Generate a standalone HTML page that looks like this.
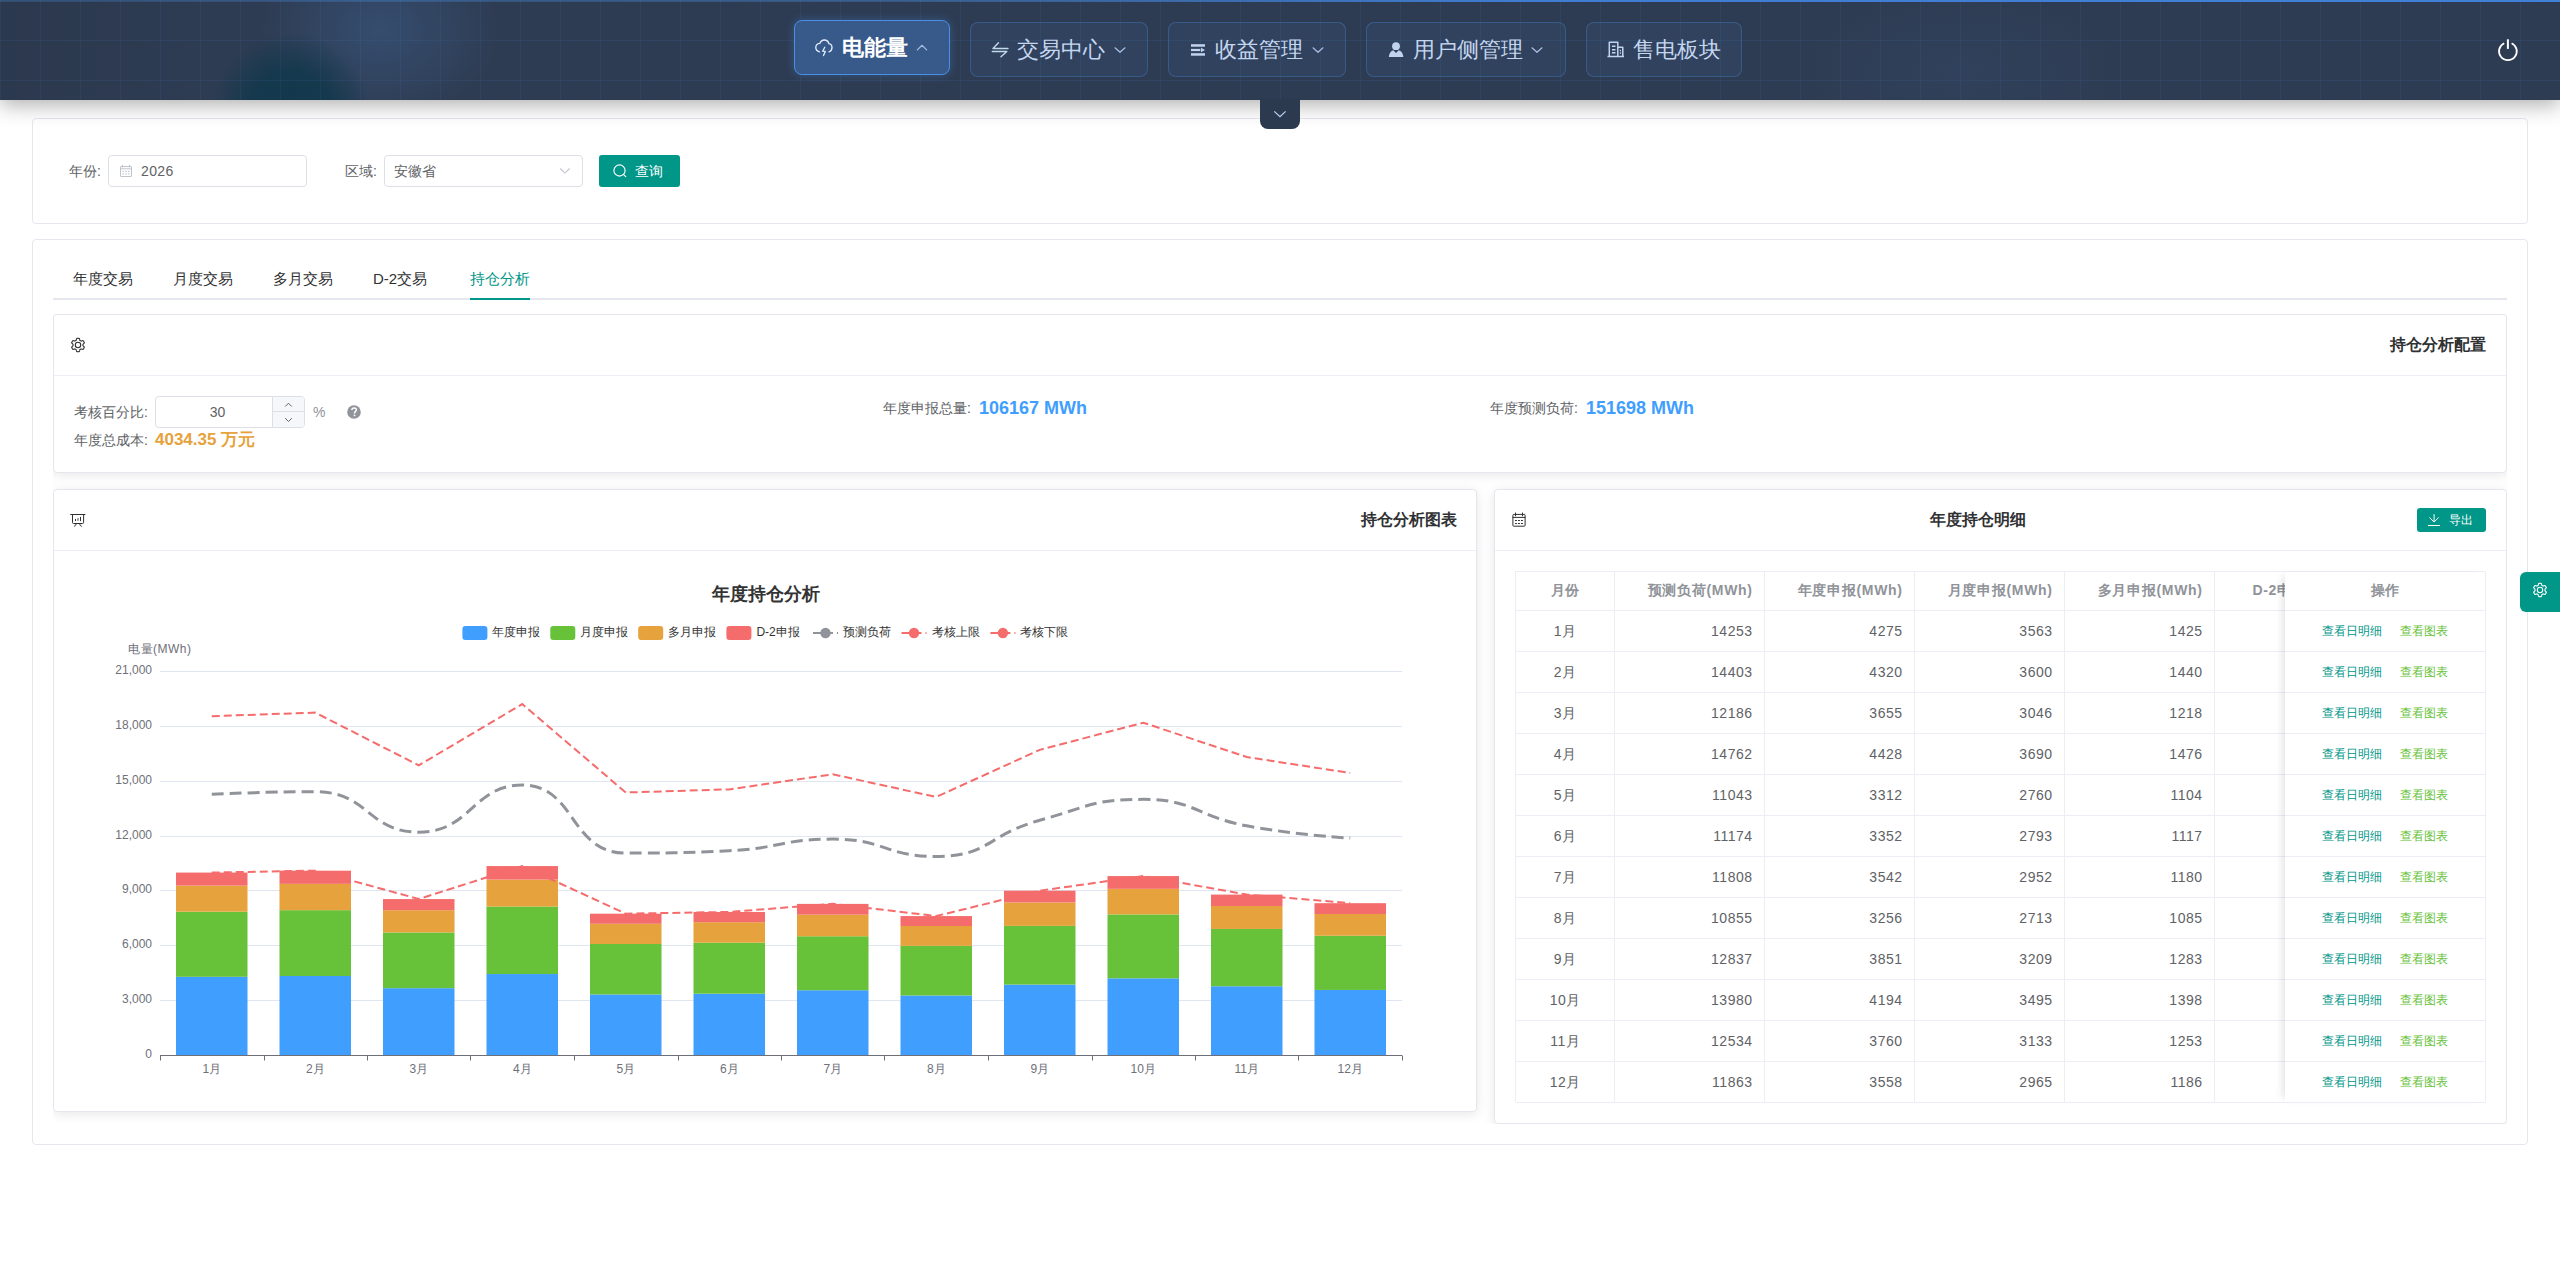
<!DOCTYPE html>
<html><head><meta charset="utf-8"><style>
*{box-sizing:border-box;margin:0;padding:0}
html,body{width:2560px;height:1271px;overflow:hidden;background:#fff;font-family:"Liberation Sans",sans-serif;color:#606266}
.abs{position:absolute}
#hdr{position:absolute;left:0;top:0;width:2560px;height:100px;background-color:#2e3c53;
 background-image:
  linear-gradient(rgba(70,130,210,0.10) 1px, transparent 1px),
  linear-gradient(90deg, rgba(70,130,210,0.10) 1px, transparent 1px),
  radial-gradient(circle 80px at 290px 112px, rgba(18,56,76,1) 0%, rgba(18,56,76,0.9) 50%, rgba(18,56,76,0) 100%),
  radial-gradient(ellipse 120px 90px at 380px 30px, rgba(62,98,145,0.45), rgba(62,98,145,0) 100%),
  radial-gradient(ellipse 160px 80px at 1960px 70px, rgba(60,92,135,0.16), rgba(60,92,135,0) 100%),
  linear-gradient(90deg, rgba(0,0,0,0.06), rgba(0,0,0,0) 230px);
 background-size:40px 40px,40px 40px,100% 100%,100% 100%,100% 100%,100% 100%;
 box-shadow:0 5px 20px rgba(0,0,0,0.32);z-index:5}
#hdr .topline{position:absolute;left:0;top:0;width:2560px;height:2px;background:linear-gradient(90deg,rgba(74,144,226,0.22),rgba(74,144,226,0.35) 35%,rgba(64,128,216,0.95) 60%,#4080d8)}
.nav{position:absolute;height:55px;border-radius:8px;border:1px solid rgba(74,144,226,0.32);background:rgba(70,125,200,0.10);color:#c5d6ef;font-size:22px;line-height:52px;white-space:nowrap}
.nav.act{background:#375a8b;border-color:#4a8ee6;color:#fff;font-weight:bold;box-shadow:0 0 10px rgba(74,144,226,0.35)}
.nav svg{position:absolute}
.nav .t{position:absolute;top:0}
#collapse{position:absolute;left:1260px;top:99px;width:40px;height:29.5px;background:#2c3a50;border-radius:0 0 8px 8px;z-index:6}
.card{position:absolute;background:#fff;border:1px solid #e4e7ed;border-radius:4px}
.sh{box-shadow:0 2px 12px 0 rgba(0,0,0,0.1)}
.lbl{position:absolute;font-size:14px;color:#606266;line-height:20px;white-space:nowrap}
.inp{position:absolute;border:1px solid #dcdfe6;border-radius:4px;background:#fff}
.btn{position:absolute;background:#009688;border-radius:3px;color:#fff;font-size:14px}
.tab{position:absolute;top:269px;font-size:15px;line-height:20px;color:#303133;white-space:nowrap}
.tab.act{color:#009688}
.ttl{position:absolute;font-size:16px;font-weight:bold;color:#303133;line-height:22px;white-space:nowrap}
.tbl{position:absolute;left:1515px;top:571px;width:970px;height:531px;border:1px solid #ebeef5;border-width:1px 0 0 1px}
.th,.td{position:absolute;border-right:1px solid #ebeef5;border-bottom:1px solid #ebeef5;padding:0 12px;white-space:nowrap;overflow:hidden}
.th{top:0;height:39px;line-height:36px;font-size:14px;font-weight:bold;color:#909399;letter-spacing:0.7px;padding-right:11.3px}
.td{height:41px;line-height:40px;font-size:14px;color:#606266;letter-spacing:0.5px;padding-right:11.5px}
.fix{position:absolute;left:2285px;top:572px;width:201px;height:530px;background:#fff;box-shadow:-6px 0 8px -4px rgba(0,0,0,0.12)}
.fth{position:absolute;left:0;top:0;width:201px;height:39px;line-height:36px;text-align:center;font-size:14px;font-weight:bold;color:#909399;border:1px solid #ebeef5;border-width:0 1px 1px 0}
.ftd{position:absolute;left:0;width:201px;height:41px;line-height:40px;text-align:center;font-size:12px;border-right:1px solid #ebeef5;border-bottom:1px solid #ebeef5}
.ftd .l1{color:#009688}
.ftd .l2{color:#67c23a;margin-left:18px}

</style></head><body>
<div id="hdr"><div class="topline"></div>
 <div class="nav act" style="left:794px;top:20px;width:156px;height:55px"><span class="t" style="left:47px;top:1px">电能量</span></div>
 <div class="nav" style="left:970px;top:22px;width:178px"><span class="t" style="left:46px;top:1px">交易中心</span></div>
 <div class="nav" style="left:1168px;top:22px;width:178px"><span class="t" style="left:46px;top:1px">收益管理</span></div>
 <div class="nav" style="left:1366px;top:22px;width:200px"><span class="t" style="left:46px;top:1px">用户侧管理</span></div>
 <div class="nav" style="left:1586px;top:22px;width:156px"><span class="t" style="left:46px;top:1px">售电板块</span></div>
 <svg style="position:absolute;left:0;top:0" width="2560" height="100" viewBox="0 0 2560 100">
  <g fill="none" stroke-linecap="round" stroke-linejoin="round">
   <path d="M819.5,51.8 C817,51.3 815.8,49.6 815.8,47.6 C815.8,45.3 817.6,43.6 819.8,43.4 C820.6,41.3 822.3,40 824.3,40 C826.6,40 828.3,41.6 828.8,43.6 C830.7,43.9 832,45.5 832,47.6 C832,49.6 830.8,51.3 829,51.8" stroke="#e6eefc" stroke-width="1.3"/>
   <path d="M824.8,47.2 L822.6,51.2 L825.3,51.4 L823.5,55.6" stroke="#e6eefc" stroke-width="1.3"/>
   <path d="M917.3,49.9 L922.1,45.3 L926.7,49.9" stroke="#a9bfe2" stroke-width="1.2"/>
   <path d="M998.5,42.8 L993,48.5 H1008 M992.3,51.5 H1006.8 L1001,56.7" stroke="#c3daea" stroke-width="1.4"/>
   <path d="M1115,47.8 L1120,52.3 L1125,47.8" stroke="#a9bfe2" stroke-width="1.2"/>
   <path d="M1313,47.8 L1318,52.3 L1323,47.8" stroke="#a9bfe2" stroke-width="1.2"/>
   <path d="M1532,47.8 L1537,52.3 L1542,47.8" stroke="#a9bfe2" stroke-width="1.2"/>
   <path d="M1609.3,56.2 V42.3 H1617.8 V56.2 M1617.8,47.2 H1622.8 V56.2 M1607.5,56.4 H1624 M1612,46.2 H1615.5 M1612,49.7 H1615.5 M1612,52.8 H1615.5 M1619.8,50.5 H1621 M1619.8,53 H1621" stroke="#c2d3ef" stroke-width="1.5" stroke-linecap="butt"/>
   <path d="M2504.2,43.2 A8.9,8.9 0 1 0 2511.6,43.2" stroke="#fff" stroke-width="1.8" stroke-linecap="butt"/>
   <path d="M2507.9,39.3 V48.9" stroke="#fff" stroke-width="2" stroke-linecap="butt"/>
  </g>
  <g fill="#c2d3ef">
   <rect x="1191" y="44.2" width="14" height="2.5"/>
   <rect x="1191" y="48.9" width="9.3" height="2.2"/>
   <path d="M1201,47.8 L1205,50 L1201,52.2Z"/>
   <rect x="1191" y="53.2" width="14" height="2.5"/>
   <circle cx="1396" cy="46.2" r="3.9"/>
   <path d="M1388.8,57 C1389.2,53 1391.3,50.8 1393.2,50.3 L1396,53 L1398.8,50.3 C1401,50.8 1403,53 1403.4,57Z"/>
  </g>
 </svg>
</div>
<div id="collapse"><svg style="position:absolute;left:0;top:0" width="40" height="29" viewBox="1260 99 40 29"><path d="M1274.3,111.4 L1280,116.7 L1285.6,111.4" fill="none" stroke="#bcd4f0" stroke-width="1.2"/></svg></div>

<!-- filter card -->
<div class="card" style="left:32px;top:118px;width:2496px;height:106px"></div>
<div class="lbl" style="left:69px;top:161px">年份:</div>
<div class="inp" style="left:108px;top:155px;width:199px;height:32px"></div>
<svg class="abs" style="left:114px;top:160px" width="24" height="24" viewBox="114 160 24 24"><g fill="none" stroke="#c0c4cc" stroke-width="1"><rect x="120.5" y="166.5" width="11" height="10" rx="0.5"/><path d="M120.5,168.8 H131.5 M122.5,165 V167.5 M129.5,165 V167.5"/></g><g fill="#c0c4cc"><rect x="122.4" y="170.8" width="1.6" height="1.1"/><rect x="125.2" y="170.8" width="1.6" height="1.1"/><rect x="127.9" y="170.8" width="1.6" height="1.1"/><rect x="122.4" y="173.4" width="1.6" height="1.1"/><rect x="125.2" y="173.4" width="1.6" height="1.1"/><rect x="127.9" y="173.4" width="1.6" height="1.1"/></g></svg>
<div class="lbl" style="left:141px;top:161px;color:#606266;letter-spacing:0.4px">2026</div>
<div class="lbl" style="left:345px;top:161px">区域:</div>
<div class="inp" style="left:384px;top:155px;width:199px;height:32px"></div>
<div class="lbl" style="left:394px;top:161px">安徽省</div>
<svg class="abs" style="left:552px;top:160px" width="24" height="22" viewBox="552 160 24 22"><path d="M560.3,168.5 L564.9,173.1 L569.6,168.5" fill="none" stroke="#c0c4cc" stroke-width="1.1"/></svg>
<div class="btn" style="left:599px;top:155px;width:81px;height:32px"></div>
<svg class="abs" style="left:606px;top:158px" width="24" height="24" viewBox="606 158 24 24"><circle cx="619.5" cy="170.5" r="5.6" fill="none" stroke="#fff" stroke-width="1.15"/><path d="M623.6,174.6 L625.8,176.6" stroke="#fff" stroke-width="1.15" stroke-linecap="round"/></svg>
<div class="lbl" style="left:635px;top:161px;color:#fff">查询</div>

<!-- main card -->
<div class="card" style="left:32px;top:239px;width:2496px;height:906px"></div>
<div class="abs" style="left:53px;top:298px;width:2454px;height:2px;background:#e4e7ed"></div>
<div class="tab" style="left:73px">年度交易</div>
<div class="tab" style="left:173px">月度交易</div>
<div class="tab" style="left:273px">多月交易</div>
<div class="tab" style="left:373px">D-2交易</div>
<div class="tab act" style="left:470px">持仓分析</div>
<div class="abs" style="left:470px;top:298px;width:60px;height:2px;background:#009688"></div>

<div class="abs" style="left:53px;top:314px;width:2454px;height:810px;overflow:hidden"><div class="abs" style="left:-53px;top:-314px;width:2560px;height:1271px"><div class="card sh" style="left:53px;top:314px;width:2454px;height:159px"></div><div class="card sh" style="left:53px;top:489px;width:1424px;height:623px"></div><div class="card sh" style="left:1494px;top:489px;width:1013px;height:635px"></div></div></div>
<!-- config card -->

<div class="abs" style="left:54px;top:375px;width:2452px;height:1px;background:#ebeef5"></div>
<svg class="abs" style="left:68px;top:334.9px" width="20" height="20" viewBox="68 334.9 20 20"><path d="M83.00,344.90 L83.00,344.81 L83.00,344.73 L82.99,344.64 L82.99,344.55 L82.98,344.46 L82.97,344.38 L82.96,344.29 L82.95,344.20 L82.94,344.12 L83.09,344.00 L83.24,343.88 L83.39,343.75 L83.53,343.62 L83.68,343.48 L83.81,343.34 L83.95,343.19 L84.08,343.04 L84.21,342.88 L84.33,342.72 L84.30,342.61 L84.25,342.50 L84.21,342.39 L84.17,342.28 L84.12,342.17 L84.07,342.07 L84.02,341.96 L83.97,341.86 L83.92,341.75 L83.86,341.65 L83.80,341.55 L83.74,341.45 L83.68,341.35 L83.62,341.25 L83.55,341.15 L83.49,341.06 L83.42,340.96 L83.35,340.87 L83.28,340.78 L83.21,340.68 L83.13,340.59 L83.06,340.50 L82.85,340.53 L82.65,340.56 L82.45,340.60 L82.26,340.64 L82.06,340.69 L81.87,340.75 L81.69,340.81 L81.50,340.87 L81.32,340.94 L81.15,341.01 L81.08,340.96 L81.01,340.91 L80.94,340.85 L80.87,340.80 L80.80,340.75 L80.72,340.71 L80.65,340.66 L80.58,340.61 L80.50,340.57 L80.42,340.53 L80.35,340.49 L80.27,340.44 L80.19,340.41 L80.11,340.37 L80.03,340.33 L79.95,340.30 L79.87,340.26 L79.79,340.23 L79.77,340.04 L79.74,339.85 L79.70,339.66 L79.66,339.47 L79.61,339.28 L79.56,339.09 L79.50,338.89 L79.43,338.70 L79.36,338.51 L79.28,338.32 L79.16,338.30 L79.05,338.28 L78.93,338.27 L78.82,338.25 L78.70,338.24 L78.58,338.23 L78.47,338.22 L78.35,338.21 L78.23,338.20 L78.12,338.20 L78.00,338.20 L77.88,338.20 L77.77,338.20 L77.65,338.21 L77.53,338.22 L77.42,338.23 L77.30,338.24 L77.18,338.25 L77.07,338.27 L76.95,338.28 L76.84,338.30 L76.72,338.32 L76.64,338.51 L76.57,338.70 L76.50,338.89 L76.44,339.09 L76.39,339.28 L76.34,339.47 L76.30,339.66 L76.26,339.85 L76.23,340.04 L76.21,340.23 L76.13,340.26 L76.05,340.30 L75.97,340.33 L75.89,340.37 L75.81,340.41 L75.73,340.44 L75.65,340.49 L75.58,340.53 L75.50,340.57 L75.42,340.61 L75.35,340.66 L75.28,340.71 L75.20,340.75 L75.13,340.80 L75.06,340.85 L74.99,340.91 L74.92,340.96 L74.85,341.01 L74.68,340.94 L74.50,340.87 L74.31,340.81 L74.13,340.75 L73.94,340.69 L73.74,340.64 L73.55,340.60 L73.35,340.56 L73.15,340.53 L72.94,340.50 L72.87,340.59 L72.79,340.68 L72.72,340.78 L72.65,340.87 L72.58,340.96 L72.51,341.06 L72.45,341.15 L72.38,341.25 L72.32,341.35 L72.26,341.45 L72.20,341.55 L72.14,341.65 L72.08,341.75 L72.03,341.86 L71.98,341.96 L71.93,342.07 L71.88,342.17 L71.83,342.28 L71.79,342.39 L71.75,342.50 L71.70,342.61 L71.67,342.72 L71.79,342.88 L71.92,343.04 L72.05,343.19 L72.19,343.34 L72.32,343.48 L72.47,343.62 L72.61,343.75 L72.76,343.88 L72.91,344.00 L73.06,344.12 L73.05,344.20 L73.04,344.29 L73.03,344.38 L73.02,344.46 L73.01,344.55 L73.01,344.64 L73.00,344.73 L73.00,344.81 L73.00,344.90 L73.00,344.99 L73.00,345.07 L73.01,345.16 L73.01,345.25 L73.02,345.34 L73.03,345.42 L73.04,345.51 L73.05,345.60 L73.06,345.68 L72.91,345.80 L72.76,345.92 L72.61,346.05 L72.47,346.18 L72.32,346.32 L72.19,346.46 L72.05,346.61 L71.92,346.76 L71.79,346.92 L71.67,347.08 L71.70,347.19 L71.75,347.30 L71.79,347.41 L71.83,347.52 L71.88,347.63 L71.93,347.73 L71.98,347.84 L72.03,347.94 L72.08,348.05 L72.14,348.15 L72.20,348.25 L72.26,348.35 L72.32,348.45 L72.38,348.55 L72.45,348.65 L72.51,348.74 L72.58,348.84 L72.65,348.93 L72.72,349.02 L72.79,349.12 L72.87,349.21 L72.94,349.30 L73.15,349.27 L73.35,349.24 L73.55,349.20 L73.74,349.16 L73.94,349.11 L74.13,349.05 L74.31,348.99 L74.50,348.93 L74.68,348.86 L74.85,348.79 L74.92,348.84 L74.99,348.89 L75.06,348.95 L75.13,349.00 L75.20,349.05 L75.28,349.09 L75.35,349.14 L75.42,349.19 L75.50,349.23 L75.58,349.27 L75.65,349.31 L75.73,349.36 L75.81,349.39 L75.89,349.43 L75.97,349.47 L76.05,349.50 L76.13,349.54 L76.21,349.57 L76.23,349.76 L76.26,349.95 L76.30,350.14 L76.34,350.33 L76.39,350.52 L76.44,350.71 L76.50,350.91 L76.57,351.10 L76.64,351.29 L76.72,351.48 L76.84,351.50 L76.95,351.52 L77.07,351.53 L77.18,351.55 L77.30,351.56 L77.42,351.57 L77.53,351.58 L77.65,351.59 L77.77,351.60 L77.88,351.60 L78.00,351.60 L78.12,351.60 L78.23,351.60 L78.35,351.59 L78.47,351.58 L78.58,351.57 L78.70,351.56 L78.82,351.55 L78.93,351.53 L79.05,351.52 L79.16,351.50 L79.28,351.48 L79.36,351.29 L79.43,351.10 L79.50,350.91 L79.56,350.71 L79.61,350.52 L79.66,350.33 L79.70,350.14 L79.74,349.95 L79.77,349.76 L79.79,349.57 L79.87,349.54 L79.95,349.50 L80.03,349.47 L80.11,349.43 L80.19,349.39 L80.27,349.36 L80.35,349.31 L80.42,349.27 L80.50,349.23 L80.58,349.19 L80.65,349.14 L80.72,349.09 L80.80,349.05 L80.87,349.00 L80.94,348.95 L81.01,348.89 L81.08,348.84 L81.15,348.79 L81.32,348.86 L81.50,348.93 L81.69,348.99 L81.87,349.05 L82.06,349.11 L82.26,349.16 L82.45,349.20 L82.65,349.24 L82.85,349.27 L83.06,349.30 L83.13,349.21 L83.21,349.12 L83.28,349.02 L83.35,348.93 L83.42,348.84 L83.49,348.74 L83.55,348.65 L83.62,348.55 L83.68,348.45 L83.74,348.35 L83.80,348.25 L83.86,348.15 L83.92,348.05 L83.97,347.94 L84.02,347.84 L84.07,347.73 L84.12,347.63 L84.17,347.52 L84.21,347.41 L84.25,347.30 L84.30,347.19 L84.33,347.08 L84.21,346.92 L84.08,346.76 L83.95,346.61 L83.81,346.46 L83.68,346.32 L83.53,346.18 L83.39,346.05 L83.24,345.92 L83.09,345.80 L82.94,345.68 L82.95,345.60 L82.96,345.51 L82.97,345.42 L82.98,345.34 L82.99,345.25 L82.99,345.16 L83.00,345.07 L83.00,344.99Z" fill="none" stroke="#303133" stroke-width="1.1" stroke-linejoin="round"/><circle cx="78" cy="344.9" r="2.7" fill="none" stroke="#303133" stroke-width="1.1"/></svg>
<div class="ttl" style="left:2390px;top:334px">持仓分析配置</div>
<div class="lbl" style="left:74px;top:402px">考核百分比:</div>
<div class="inp" style="left:155px;top:396px;width:150px;height:32px"></div>
<div class="abs" style="left:272px;top:397px;width:32px;height:30px;background:#f5f7fa;border-left:1px solid #dcdfe6;border-radius:0 3px 3px 0"></div>
<div class="abs" style="left:273px;top:411px;width:31px;height:1px;background:#dcdfe6"></div>
<svg class="abs" style="left:270px;top:394px" width="40" height="36" viewBox="270 394 40 36"><path d="M285.2,406.5 L288.5,403.2 L291.8,406.5 M285.2,418.2 L288.5,421.5 L291.8,418.2" fill="none" stroke="#606266" stroke-width="1"/></svg>

<div class="lbl" style="left:159px;top:402px;width:117px;text-align:center">30</div>
<div class="lbl" style="left:313px;top:402px;color:#909399">%</div>
<svg class="abs" style="left:340px;top:400px" width="26" height="24" viewBox="340 400 26 24"><circle cx="354" cy="412" r="6.8" fill="#909399"/><path d="M351.9,409.9 C351.9,408.6 352.9,407.9 354.2,407.9 C355.5,407.9 356.4,408.7 356.4,409.8 C356.4,411.2 354.7,411.5 354.5,413 V413.6" fill="none" stroke="#fff" stroke-width="1.5"/><rect x="353.7" y="414.6" width="1.6" height="1.6" fill="#fff"/></svg>
<div class="lbl" style="left:74px;top:430px">年度总成本:</div>
<div class="lbl" style="left:155px;top:429px;font-size:17px;font-weight:bold;color:#e6a23c;line-height:22px">4034.35 万元</div>
<div class="lbl" style="left:883px;top:398px">年度申报总量:</div>
<div class="lbl" style="left:979px;top:397px;font-size:18px;font-weight:bold;color:#409eff;line-height:22px">106167 MWh</div>
<div class="lbl" style="left:1490px;top:398px">年度预测负荷:</div>
<div class="lbl" style="left:1586px;top:397px;font-size:18px;font-weight:bold;color:#409eff;line-height:22px">151698 MWh</div>

<!-- chart card -->

<div class="abs" style="left:54px;top:550px;width:1422px;height:1px;background:#ebeef5"></div>
<svg class="abs" style="left:68px;top:510px" width="20" height="20" viewBox="68 510 20 20"><g fill="none" stroke="#303133" stroke-width="1" stroke-linecap="round"><path d="M70.6,514.5 H85"/><path d="M72.5,514.5 V522.5 Q72.5,523.5 73.5,523.5 H82.6 Q83.6,523.5 83.6,522.5 V514.5"/><path d="M76.3,523.7 Q76,525.8 74.4,526.3 M79.5,523.7 Q79.8,525.8 81.4,526.3"/><path d="M75.5,519.4 V520.7 M80.5,517.3 V520.7"/></g><rect x="77.2" y="518.2" width="1.5" height="2.6" fill="#7d8087"/></svg>
<div class="ttl" style="left:1361px;top:509px">持仓分析图表</div>
<svg width="1424" height="560" viewBox="53 550 1424 560" style="position:absolute;left:53px;top:550px">
<text x="152" y="1057.5" text-anchor="end" font-size="12" fill="#6E7079" font-family='"Liberation Sans", sans-serif'>0</text>
<line x1="160.0" y1="1000.5" x2="1402.0" y2="1000.5" stroke="#E0E6F1" stroke-width="1"/>
<text x="152" y="1002.5" text-anchor="end" font-size="12" fill="#6E7079" font-family='"Liberation Sans", sans-serif'>3,000</text>
<line x1="160.0" y1="945.5" x2="1402.0" y2="945.5" stroke="#E0E6F1" stroke-width="1"/>
<text x="152" y="947.5" text-anchor="end" font-size="12" fill="#6E7079" font-family='"Liberation Sans", sans-serif'>6,000</text>
<line x1="160.0" y1="890.5" x2="1402.0" y2="890.5" stroke="#E0E6F1" stroke-width="1"/>
<text x="152" y="892.5" text-anchor="end" font-size="12" fill="#6E7079" font-family='"Liberation Sans", sans-serif'>9,000</text>
<line x1="160.0" y1="836.5" x2="1402.0" y2="836.5" stroke="#E0E6F1" stroke-width="1"/>
<text x="152" y="838.5" text-anchor="end" font-size="12" fill="#6E7079" font-family='"Liberation Sans", sans-serif'>12,000</text>
<line x1="160.0" y1="781.5" x2="1402.0" y2="781.5" stroke="#E0E6F1" stroke-width="1"/>
<text x="152" y="783.5" text-anchor="end" font-size="12" fill="#6E7079" font-family='"Liberation Sans", sans-serif'>15,000</text>
<line x1="160.0" y1="726.5" x2="1402.0" y2="726.5" stroke="#E0E6F1" stroke-width="1"/>
<text x="152" y="728.5" text-anchor="end" font-size="12" fill="#6E7079" font-family='"Liberation Sans", sans-serif'>18,000</text>
<line x1="160.0" y1="671.5" x2="1402.0" y2="671.5" stroke="#E0E6F1" stroke-width="1"/>
<text x="152" y="673.5" text-anchor="end" font-size="12" fill="#6E7079" font-family='"Liberation Sans", sans-serif'>21,000</text>
<text x="128" y="653" font-size="12" letter-spacing="0.5" fill="#6E7079" font-family='"Liberation Sans", sans-serif'>电量(MWh)</text>
<rect x="176.00" y="976.83" width="71.5" height="78.17" fill="#409EFF"/>
<rect x="176.00" y="911.68" width="71.5" height="65.15" fill="#67C23A"/>
<rect x="176.00" y="885.62" width="71.5" height="26.06" fill="#E6A23C"/>
<rect x="176.00" y="872.58" width="71.5" height="13.04" fill="#F56C6C"/>
<rect x="279.50" y="976.01" width="71.5" height="78.99" fill="#409EFF"/>
<rect x="279.50" y="910.18" width="71.5" height="65.83" fill="#67C23A"/>
<rect x="279.50" y="883.85" width="71.5" height="26.33" fill="#E6A23C"/>
<rect x="279.50" y="870.68" width="71.5" height="13.17" fill="#F56C6C"/>
<rect x="383.00" y="988.17" width="71.5" height="66.83" fill="#409EFF"/>
<rect x="383.00" y="932.47" width="71.5" height="55.70" fill="#67C23A"/>
<rect x="383.00" y="910.20" width="71.5" height="22.27" fill="#E6A23C"/>
<rect x="383.00" y="899.06" width="71.5" height="11.14" fill="#F56C6C"/>
<rect x="486.50" y="974.03" width="71.5" height="80.97" fill="#409EFF"/>
<rect x="486.50" y="906.56" width="71.5" height="67.47" fill="#67C23A"/>
<rect x="486.50" y="879.57" width="71.5" height="26.99" fill="#E6A23C"/>
<rect x="486.50" y="866.07" width="71.5" height="13.49" fill="#F56C6C"/>
<rect x="590.00" y="994.44" width="71.5" height="60.56" fill="#409EFF"/>
<rect x="590.00" y="943.97" width="71.5" height="50.47" fill="#67C23A"/>
<rect x="590.00" y="923.78" width="71.5" height="20.19" fill="#E6A23C"/>
<rect x="590.00" y="913.69" width="71.5" height="10.09" fill="#F56C6C"/>
<rect x="693.50" y="993.71" width="71.5" height="61.29" fill="#409EFF"/>
<rect x="693.50" y="942.63" width="71.5" height="51.07" fill="#67C23A"/>
<rect x="693.50" y="922.21" width="71.5" height="20.43" fill="#E6A23C"/>
<rect x="693.50" y="911.99" width="71.5" height="10.22" fill="#F56C6C"/>
<rect x="797.00" y="990.23" width="71.5" height="64.77" fill="#409EFF"/>
<rect x="797.00" y="936.25" width="71.5" height="53.98" fill="#67C23A"/>
<rect x="797.00" y="914.68" width="71.5" height="21.58" fill="#E6A23C"/>
<rect x="797.00" y="903.89" width="71.5" height="10.79" fill="#F56C6C"/>
<rect x="900.50" y="995.46" width="71.5" height="59.54" fill="#409EFF"/>
<rect x="900.50" y="945.85" width="71.5" height="49.61" fill="#67C23A"/>
<rect x="900.50" y="926.01" width="71.5" height="19.84" fill="#E6A23C"/>
<rect x="900.50" y="916.08" width="71.5" height="9.93" fill="#F56C6C"/>
<rect x="1004.00" y="984.58" width="71.5" height="70.42" fill="#409EFF"/>
<rect x="1004.00" y="925.90" width="71.5" height="58.68" fill="#67C23A"/>
<rect x="1004.00" y="902.44" width="71.5" height="23.46" fill="#E6A23C"/>
<rect x="1004.00" y="890.70" width="71.5" height="11.74" fill="#F56C6C"/>
<rect x="1107.50" y="978.31" width="71.5" height="76.69" fill="#409EFF"/>
<rect x="1107.50" y="914.40" width="71.5" height="63.91" fill="#67C23A"/>
<rect x="1107.50" y="888.84" width="71.5" height="25.56" fill="#E6A23C"/>
<rect x="1107.50" y="876.06" width="71.5" height="12.78" fill="#F56C6C"/>
<rect x="1211.00" y="986.25" width="71.5" height="68.75" fill="#409EFF"/>
<rect x="1211.00" y="928.96" width="71.5" height="57.29" fill="#67C23A"/>
<rect x="1211.00" y="906.04" width="71.5" height="22.91" fill="#E6A23C"/>
<rect x="1211.00" y="894.58" width="71.5" height="11.47" fill="#F56C6C"/>
<rect x="1314.50" y="989.94" width="71.5" height="65.06" fill="#409EFF"/>
<rect x="1314.50" y="935.72" width="71.5" height="54.22" fill="#67C23A"/>
<rect x="1314.50" y="914.04" width="71.5" height="21.69" fill="#E6A23C"/>
<rect x="1314.50" y="903.19" width="71.5" height="10.84" fill="#F56C6C"/>
<line x1="160.0" y1="1055.5" x2="1402.0" y2="1055.5" stroke="#6E7079" stroke-width="1"/>
<line x1="160.5" y1="1055.5" x2="160.5" y2="1060.5" stroke="#6E7079" stroke-width="1"/>
<line x1="264.5" y1="1055.5" x2="264.5" y2="1060.5" stroke="#6E7079" stroke-width="1"/>
<line x1="367.5" y1="1055.5" x2="367.5" y2="1060.5" stroke="#6E7079" stroke-width="1"/>
<line x1="470.5" y1="1055.5" x2="470.5" y2="1060.5" stroke="#6E7079" stroke-width="1"/>
<line x1="574.5" y1="1055.5" x2="574.5" y2="1060.5" stroke="#6E7079" stroke-width="1"/>
<line x1="678.5" y1="1055.5" x2="678.5" y2="1060.5" stroke="#6E7079" stroke-width="1"/>
<line x1="781.5" y1="1055.5" x2="781.5" y2="1060.5" stroke="#6E7079" stroke-width="1"/>
<line x1="884.5" y1="1055.5" x2="884.5" y2="1060.5" stroke="#6E7079" stroke-width="1"/>
<line x1="988.5" y1="1055.5" x2="988.5" y2="1060.5" stroke="#6E7079" stroke-width="1"/>
<line x1="1092.5" y1="1055.5" x2="1092.5" y2="1060.5" stroke="#6E7079" stroke-width="1"/>
<line x1="1195.5" y1="1055.5" x2="1195.5" y2="1060.5" stroke="#6E7079" stroke-width="1"/>
<line x1="1298.5" y1="1055.5" x2="1298.5" y2="1060.5" stroke="#6E7079" stroke-width="1"/>
<line x1="1402.5" y1="1055.5" x2="1402.5" y2="1060.5" stroke="#6E7079" stroke-width="1"/>
<text x="211.75" y="1072.5" text-anchor="middle" font-size="12" fill="#6E7079" font-family='"Liberation Sans", sans-serif'>1月</text>
<text x="315.25" y="1072.5" text-anchor="middle" font-size="12" fill="#6E7079" font-family='"Liberation Sans", sans-serif'>2月</text>
<text x="418.75" y="1072.5" text-anchor="middle" font-size="12" fill="#6E7079" font-family='"Liberation Sans", sans-serif'>3月</text>
<text x="522.25" y="1072.5" text-anchor="middle" font-size="12" fill="#6E7079" font-family='"Liberation Sans", sans-serif'>4月</text>
<text x="625.75" y="1072.5" text-anchor="middle" font-size="12" fill="#6E7079" font-family='"Liberation Sans", sans-serif'>5月</text>
<text x="729.25" y="1072.5" text-anchor="middle" font-size="12" fill="#6E7079" font-family='"Liberation Sans", sans-serif'>6月</text>
<text x="832.75" y="1072.5" text-anchor="middle" font-size="12" fill="#6E7079" font-family='"Liberation Sans", sans-serif'>7月</text>
<text x="936.25" y="1072.5" text-anchor="middle" font-size="12" fill="#6E7079" font-family='"Liberation Sans", sans-serif'>8月</text>
<text x="1039.75" y="1072.5" text-anchor="middle" font-size="12" fill="#6E7079" font-family='"Liberation Sans", sans-serif'>9月</text>
<text x="1143.25" y="1072.5" text-anchor="middle" font-size="12" fill="#6E7079" font-family='"Liberation Sans", sans-serif'>10月</text>
<text x="1246.75" y="1072.5" text-anchor="middle" font-size="12" fill="#6E7079" font-family='"Liberation Sans", sans-serif'>11月</text>
<text x="1350.25" y="1072.5" text-anchor="middle" font-size="12" fill="#6E7079" font-family='"Liberation Sans", sans-serif'>12月</text>
<path d="M211.75,794.37 C211.75,794.37 265.34,791.63 315.25,791.63 C368.84,791.63 367.59,832.17 418.75,832.17 C471.09,832.17 472.71,785.07 522.25,785.07 C576.21,785.07 569.38,853.07 625.75,853.07 C672.88,853.07 677.65,853.07 729.25,850.68 C781.15,848.27 781.20,839.08 832.75,839.08 C884.70,839.08 885.63,856.51 936.25,856.51 C989.13,856.51 987.02,834.82 1039.75,820.27 C1090.52,806.25 1091.80,799.37 1143.25,799.37 C1195.30,799.37 1194.36,816.01 1246.75,825.81 C1297.86,835.37 1350.25,838.08 1350.25,838.08" fill="none" stroke="#909399" stroke-width="3" stroke-dasharray="12 6"/>
<path d="M211.75,716.19 L315.25,712.62 L418.75,765.32 L522.25,704.09 L625.75,792.49 L729.25,789.38 L832.75,774.31 L936.25,796.96 L1039.75,749.85 L1143.25,722.68 L1246.75,757.05 L1350.25,773.00" fill="none" stroke="#F56C6C" stroke-width="2" stroke-dasharray="8 4"/>
<path d="M211.75,872.56 L315.25,870.64 L418.75,899.02 L522.25,866.05 L625.75,913.65 L729.25,911.97 L832.75,903.86 L936.25,916.06 L1039.75,890.69 L1143.25,876.06 L1246.75,894.56 L1350.25,903.15" fill="none" stroke="#F56C6C" stroke-width="2" stroke-dasharray="8 4"/>
<text x="765.5" y="599.5" text-anchor="middle" font-size="18" font-weight="bold" fill="#333" font-family='"Liberation Sans", sans-serif'>年度持仓分析</text>
<rect x="462.4" y="626" width="25" height="14" rx="3" fill="#409EFF"/>
<text x="492.4" y="636" font-size="12" fill="#333" font-family='"Liberation Sans", sans-serif'>年度申报</text>
<rect x="550.3" y="626" width="25" height="14" rx="3" fill="#67C23A"/>
<text x="580.3" y="636" font-size="12" fill="#333" font-family='"Liberation Sans", sans-serif'>月度申报</text>
<rect x="638.2" y="626" width="25" height="14" rx="3" fill="#E6A23C"/>
<text x="668.2" y="636" font-size="12" fill="#333" font-family='"Liberation Sans", sans-serif'>多月申报</text>
<rect x="726.4" y="626" width="25" height="14" rx="3" fill="#F56C6C"/>
<text x="756.4" y="636" font-size="12" fill="#333" font-family='"Liberation Sans", sans-serif'>D-2申报</text>
<line x1="813" y1="633" x2="838" y2="633" stroke="#909399" stroke-width="2" stroke-dasharray="8 4"/>
<circle cx="825.5" cy="633" r="5.2" fill="#909399"/>
<text x="843" y="636" font-size="12" fill="#333" font-family='"Liberation Sans", sans-serif'>预测负荷</text>
<line x1="901.5" y1="633" x2="926.5" y2="633" stroke="#F56C6C" stroke-width="2" stroke-dasharray="8 4"/>
<circle cx="914.0" cy="633" r="5.2" fill="#F56C6C"/>
<text x="931.5" y="636" font-size="12" fill="#333" font-family='"Liberation Sans", sans-serif'>考核上限</text>
<line x1="990.4" y1="633" x2="1015.4" y2="633" stroke="#F56C6C" stroke-width="2" stroke-dasharray="8 4"/>
<circle cx="1002.9" cy="633" r="5.2" fill="#F56C6C"/>
<text x="1020.4" y="636" font-size="12" fill="#333" font-family='"Liberation Sans", sans-serif'>考核下限</text>
</svg>

<!-- table card -->

<div class="abs" style="left:1495px;top:550px;width:1011px;height:1px;background:#ebeef5"></div>
<svg class="abs" style="left:1509px;top:510px" width="20" height="20" viewBox="1509 510 20 20"><g fill="none" stroke="#303133" stroke-width="1"><rect x="1512.9" y="514.4" width="12.2" height="11.8" rx="0.8"/><path d="M1512.9,517.4 H1525.1 M1515.5,513 V515.8 M1522.5,513 V515.8" stroke-linecap="round"/></g><g fill="#303133"><rect x="1515" y="520" width="1.9" height="1"/><rect x="1518" y="520" width="1.9" height="1"/><rect x="1521" y="520" width="1.9" height="1"/><rect x="1515" y="523" width="1.9" height="1"/><rect x="1518" y="523" width="1.9" height="1"/><rect x="1521" y="523" width="1.9" height="1"/></g></svg>
<div class="ttl" style="left:1930px;top:509px">年度持仓明细</div>
<div class="btn" style="left:2417px;top:508px;width:69px;height:24px"></div>
<svg class="abs" style="left:2420px;top:508px" width="24" height="24" viewBox="2420 508 24 24"><path d="M2434.1,514.2 V522 M2429.4,517.4 L2434.1,522 L2438.7,517.4 M2428,525.5 H2440" fill="none" stroke="#fff" stroke-width="1"/></svg>
<div class="lbl" style="left:2449px;top:510px;color:#fff;font-size:12px">导出</div>
<div class="tbl">
<div class="th" style="left:0px;width:99px;text-align:center">月份</div>
<div class="th" style="left:99px;width:150px;text-align:right">预测负荷(MWh)</div>
<div class="th" style="left:249px;width:150px;text-align:right">年度申报(MWh)</div>
<div class="th" style="left:399px;width:150px;text-align:right">月度申报(MWh)</div>
<div class="th" style="left:549px;width:150px;text-align:right">多月申报(MWh)</div>
<div class="th" style="left:699px;width:150px;text-align:right">D-2申报(MWh)</div>
<div class="td" style="left:0px;top:39px;width:99px;text-align:center">1月</div>
<div class="td" style="left:99px;top:39px;width:150px;text-align:right">14253</div>
<div class="td" style="left:249px;top:39px;width:150px;text-align:right">4275</div>
<div class="td" style="left:399px;top:39px;width:150px;text-align:right">3563</div>
<div class="td" style="left:549px;top:39px;width:150px;text-align:right">1425</div>
<div class="td" style="left:699px;top:39px;width:150px"></div>
<div class="td" style="left:0px;top:80px;width:99px;text-align:center">2月</div>
<div class="td" style="left:99px;top:80px;width:150px;text-align:right">14403</div>
<div class="td" style="left:249px;top:80px;width:150px;text-align:right">4320</div>
<div class="td" style="left:399px;top:80px;width:150px;text-align:right">3600</div>
<div class="td" style="left:549px;top:80px;width:150px;text-align:right">1440</div>
<div class="td" style="left:699px;top:80px;width:150px"></div>
<div class="td" style="left:0px;top:121px;width:99px;text-align:center">3月</div>
<div class="td" style="left:99px;top:121px;width:150px;text-align:right">12186</div>
<div class="td" style="left:249px;top:121px;width:150px;text-align:right">3655</div>
<div class="td" style="left:399px;top:121px;width:150px;text-align:right">3046</div>
<div class="td" style="left:549px;top:121px;width:150px;text-align:right">1218</div>
<div class="td" style="left:699px;top:121px;width:150px"></div>
<div class="td" style="left:0px;top:162px;width:99px;text-align:center">4月</div>
<div class="td" style="left:99px;top:162px;width:150px;text-align:right">14762</div>
<div class="td" style="left:249px;top:162px;width:150px;text-align:right">4428</div>
<div class="td" style="left:399px;top:162px;width:150px;text-align:right">3690</div>
<div class="td" style="left:549px;top:162px;width:150px;text-align:right">1476</div>
<div class="td" style="left:699px;top:162px;width:150px"></div>
<div class="td" style="left:0px;top:203px;width:99px;text-align:center">5月</div>
<div class="td" style="left:99px;top:203px;width:150px;text-align:right">11043</div>
<div class="td" style="left:249px;top:203px;width:150px;text-align:right">3312</div>
<div class="td" style="left:399px;top:203px;width:150px;text-align:right">2760</div>
<div class="td" style="left:549px;top:203px;width:150px;text-align:right">1104</div>
<div class="td" style="left:699px;top:203px;width:150px"></div>
<div class="td" style="left:0px;top:244px;width:99px;text-align:center">6月</div>
<div class="td" style="left:99px;top:244px;width:150px;text-align:right">11174</div>
<div class="td" style="left:249px;top:244px;width:150px;text-align:right">3352</div>
<div class="td" style="left:399px;top:244px;width:150px;text-align:right">2793</div>
<div class="td" style="left:549px;top:244px;width:150px;text-align:right">1117</div>
<div class="td" style="left:699px;top:244px;width:150px"></div>
<div class="td" style="left:0px;top:285px;width:99px;text-align:center">7月</div>
<div class="td" style="left:99px;top:285px;width:150px;text-align:right">11808</div>
<div class="td" style="left:249px;top:285px;width:150px;text-align:right">3542</div>
<div class="td" style="left:399px;top:285px;width:150px;text-align:right">2952</div>
<div class="td" style="left:549px;top:285px;width:150px;text-align:right">1180</div>
<div class="td" style="left:699px;top:285px;width:150px"></div>
<div class="td" style="left:0px;top:326px;width:99px;text-align:center">8月</div>
<div class="td" style="left:99px;top:326px;width:150px;text-align:right">10855</div>
<div class="td" style="left:249px;top:326px;width:150px;text-align:right">3256</div>
<div class="td" style="left:399px;top:326px;width:150px;text-align:right">2713</div>
<div class="td" style="left:549px;top:326px;width:150px;text-align:right">1085</div>
<div class="td" style="left:699px;top:326px;width:150px"></div>
<div class="td" style="left:0px;top:367px;width:99px;text-align:center">9月</div>
<div class="td" style="left:99px;top:367px;width:150px;text-align:right">12837</div>
<div class="td" style="left:249px;top:367px;width:150px;text-align:right">3851</div>
<div class="td" style="left:399px;top:367px;width:150px;text-align:right">3209</div>
<div class="td" style="left:549px;top:367px;width:150px;text-align:right">1283</div>
<div class="td" style="left:699px;top:367px;width:150px"></div>
<div class="td" style="left:0px;top:408px;width:99px;text-align:center">10月</div>
<div class="td" style="left:99px;top:408px;width:150px;text-align:right">13980</div>
<div class="td" style="left:249px;top:408px;width:150px;text-align:right">4194</div>
<div class="td" style="left:399px;top:408px;width:150px;text-align:right">3495</div>
<div class="td" style="left:549px;top:408px;width:150px;text-align:right">1398</div>
<div class="td" style="left:699px;top:408px;width:150px"></div>
<div class="td" style="left:0px;top:449px;width:99px;text-align:center">11月</div>
<div class="td" style="left:99px;top:449px;width:150px;text-align:right">12534</div>
<div class="td" style="left:249px;top:449px;width:150px;text-align:right">3760</div>
<div class="td" style="left:399px;top:449px;width:150px;text-align:right">3133</div>
<div class="td" style="left:549px;top:449px;width:150px;text-align:right">1253</div>
<div class="td" style="left:699px;top:449px;width:150px"></div>
<div class="td" style="left:0px;top:490px;width:99px;text-align:center">12月</div>
<div class="td" style="left:99px;top:490px;width:150px;text-align:right">11863</div>
<div class="td" style="left:249px;top:490px;width:150px;text-align:right">3558</div>
<div class="td" style="left:399px;top:490px;width:150px;text-align:right">2965</div>
<div class="td" style="left:549px;top:490px;width:150px;text-align:right">1186</div>
<div class="td" style="left:699px;top:490px;width:150px"></div>
</div>
<div class="fix">
<div class="fth">操作</div>
<div class="ftd" style="top:39px"><span class="l1">查看日明细</span><span class="l2">查看图表</span></div>
<div class="ftd" style="top:80px"><span class="l1">查看日明细</span><span class="l2">查看图表</span></div>
<div class="ftd" style="top:121px"><span class="l1">查看日明细</span><span class="l2">查看图表</span></div>
<div class="ftd" style="top:162px"><span class="l1">查看日明细</span><span class="l2">查看图表</span></div>
<div class="ftd" style="top:203px"><span class="l1">查看日明细</span><span class="l2">查看图表</span></div>
<div class="ftd" style="top:244px"><span class="l1">查看日明细</span><span class="l2">查看图表</span></div>
<div class="ftd" style="top:285px"><span class="l1">查看日明细</span><span class="l2">查看图表</span></div>
<div class="ftd" style="top:326px"><span class="l1">查看日明细</span><span class="l2">查看图表</span></div>
<div class="ftd" style="top:367px"><span class="l1">查看日明细</span><span class="l2">查看图表</span></div>
<div class="ftd" style="top:408px"><span class="l1">查看日明细</span><span class="l2">查看图表</span></div>
<div class="ftd" style="top:449px"><span class="l1">查看日明细</span><span class="l2">查看图表</span></div>
<div class="ftd" style="top:490px"><span class="l1">查看日明细</span><span class="l2">查看图表</span></div>
</div>

<!-- floating settings -->
<div class="abs" style="left:2520px;top:572px;width:40px;height:40px;background:#009688;border-radius:6px 0 0 6px"></div>
<svg class="abs" style="left:2530px;top:580px" width="20" height="20" viewBox="2530 580 20 20"><path d="M2545.00,590.00 L2545.00,589.91 L2545.00,589.83 L2544.99,589.74 L2544.99,589.65 L2544.98,589.56 L2544.97,589.48 L2544.96,589.39 L2544.95,589.30 L2544.94,589.22 L2545.09,589.10 L2545.24,588.98 L2545.39,588.85 L2545.53,588.72 L2545.68,588.58 L2545.81,588.44 L2545.95,588.29 L2546.08,588.14 L2546.21,587.98 L2546.33,587.82 L2546.30,587.71 L2546.25,587.60 L2546.21,587.49 L2546.17,587.38 L2546.12,587.27 L2546.07,587.17 L2546.02,587.06 L2545.97,586.96 L2545.92,586.85 L2545.86,586.75 L2545.80,586.65 L2545.74,586.55 L2545.68,586.45 L2545.62,586.35 L2545.55,586.25 L2545.49,586.16 L2545.42,586.06 L2545.35,585.97 L2545.28,585.88 L2545.21,585.78 L2545.13,585.69 L2545.06,585.60 L2544.85,585.63 L2544.65,585.66 L2544.45,585.70 L2544.26,585.74 L2544.06,585.79 L2543.87,585.85 L2543.69,585.91 L2543.50,585.97 L2543.32,586.04 L2543.15,586.11 L2543.08,586.06 L2543.01,586.01 L2542.94,585.95 L2542.87,585.90 L2542.80,585.85 L2542.72,585.81 L2542.65,585.76 L2542.58,585.71 L2542.50,585.67 L2542.42,585.63 L2542.35,585.59 L2542.27,585.54 L2542.19,585.51 L2542.11,585.47 L2542.03,585.43 L2541.95,585.40 L2541.87,585.36 L2541.79,585.33 L2541.77,585.14 L2541.74,584.95 L2541.70,584.76 L2541.66,584.57 L2541.61,584.38 L2541.56,584.19 L2541.50,583.99 L2541.43,583.80 L2541.36,583.61 L2541.28,583.42 L2541.16,583.40 L2541.05,583.38 L2540.93,583.37 L2540.82,583.35 L2540.70,583.34 L2540.58,583.33 L2540.47,583.32 L2540.35,583.31 L2540.23,583.30 L2540.12,583.30 L2540.00,583.30 L2539.88,583.30 L2539.77,583.30 L2539.65,583.31 L2539.53,583.32 L2539.42,583.33 L2539.30,583.34 L2539.18,583.35 L2539.07,583.37 L2538.95,583.38 L2538.84,583.40 L2538.72,583.42 L2538.64,583.61 L2538.57,583.80 L2538.50,583.99 L2538.44,584.19 L2538.39,584.38 L2538.34,584.57 L2538.30,584.76 L2538.26,584.95 L2538.23,585.14 L2538.21,585.33 L2538.13,585.36 L2538.05,585.40 L2537.97,585.43 L2537.89,585.47 L2537.81,585.51 L2537.73,585.54 L2537.65,585.59 L2537.58,585.63 L2537.50,585.67 L2537.42,585.71 L2537.35,585.76 L2537.28,585.81 L2537.20,585.85 L2537.13,585.90 L2537.06,585.95 L2536.99,586.01 L2536.92,586.06 L2536.85,586.11 L2536.68,586.04 L2536.50,585.97 L2536.31,585.91 L2536.13,585.85 L2535.94,585.79 L2535.74,585.74 L2535.55,585.70 L2535.35,585.66 L2535.15,585.63 L2534.94,585.60 L2534.87,585.69 L2534.79,585.78 L2534.72,585.88 L2534.65,585.97 L2534.58,586.06 L2534.51,586.16 L2534.45,586.25 L2534.38,586.35 L2534.32,586.45 L2534.26,586.55 L2534.20,586.65 L2534.14,586.75 L2534.08,586.85 L2534.03,586.96 L2533.98,587.06 L2533.93,587.17 L2533.88,587.27 L2533.83,587.38 L2533.79,587.49 L2533.75,587.60 L2533.70,587.71 L2533.67,587.82 L2533.79,587.98 L2533.92,588.14 L2534.05,588.29 L2534.19,588.44 L2534.32,588.58 L2534.47,588.72 L2534.61,588.85 L2534.76,588.98 L2534.91,589.10 L2535.06,589.22 L2535.05,589.30 L2535.04,589.39 L2535.03,589.48 L2535.02,589.56 L2535.01,589.65 L2535.01,589.74 L2535.00,589.83 L2535.00,589.91 L2535.00,590.00 L2535.00,590.09 L2535.00,590.17 L2535.01,590.26 L2535.01,590.35 L2535.02,590.44 L2535.03,590.52 L2535.04,590.61 L2535.05,590.70 L2535.06,590.78 L2534.91,590.90 L2534.76,591.02 L2534.61,591.15 L2534.47,591.28 L2534.32,591.42 L2534.19,591.56 L2534.05,591.71 L2533.92,591.86 L2533.79,592.02 L2533.67,592.18 L2533.70,592.29 L2533.75,592.40 L2533.79,592.51 L2533.83,592.62 L2533.88,592.73 L2533.93,592.83 L2533.98,592.94 L2534.03,593.04 L2534.08,593.15 L2534.14,593.25 L2534.20,593.35 L2534.26,593.45 L2534.32,593.55 L2534.38,593.65 L2534.45,593.75 L2534.51,593.84 L2534.58,593.94 L2534.65,594.03 L2534.72,594.12 L2534.79,594.22 L2534.87,594.31 L2534.94,594.40 L2535.15,594.37 L2535.35,594.34 L2535.55,594.30 L2535.74,594.26 L2535.94,594.21 L2536.13,594.15 L2536.31,594.09 L2536.50,594.03 L2536.68,593.96 L2536.85,593.89 L2536.92,593.94 L2536.99,593.99 L2537.06,594.05 L2537.13,594.10 L2537.20,594.15 L2537.28,594.19 L2537.35,594.24 L2537.42,594.29 L2537.50,594.33 L2537.58,594.37 L2537.65,594.41 L2537.73,594.46 L2537.81,594.49 L2537.89,594.53 L2537.97,594.57 L2538.05,594.60 L2538.13,594.64 L2538.21,594.67 L2538.23,594.86 L2538.26,595.05 L2538.30,595.24 L2538.34,595.43 L2538.39,595.62 L2538.44,595.81 L2538.50,596.01 L2538.57,596.20 L2538.64,596.39 L2538.72,596.58 L2538.84,596.60 L2538.95,596.62 L2539.07,596.63 L2539.18,596.65 L2539.30,596.66 L2539.42,596.67 L2539.53,596.68 L2539.65,596.69 L2539.77,596.70 L2539.88,596.70 L2540.00,596.70 L2540.12,596.70 L2540.23,596.70 L2540.35,596.69 L2540.47,596.68 L2540.58,596.67 L2540.70,596.66 L2540.82,596.65 L2540.93,596.63 L2541.05,596.62 L2541.16,596.60 L2541.28,596.58 L2541.36,596.39 L2541.43,596.20 L2541.50,596.01 L2541.56,595.81 L2541.61,595.62 L2541.66,595.43 L2541.70,595.24 L2541.74,595.05 L2541.77,594.86 L2541.79,594.67 L2541.87,594.64 L2541.95,594.60 L2542.03,594.57 L2542.11,594.53 L2542.19,594.49 L2542.27,594.46 L2542.35,594.41 L2542.42,594.37 L2542.50,594.33 L2542.58,594.29 L2542.65,594.24 L2542.72,594.19 L2542.80,594.15 L2542.87,594.10 L2542.94,594.05 L2543.01,593.99 L2543.08,593.94 L2543.15,593.89 L2543.32,593.96 L2543.50,594.03 L2543.69,594.09 L2543.87,594.15 L2544.06,594.21 L2544.26,594.26 L2544.45,594.30 L2544.65,594.34 L2544.85,594.37 L2545.06,594.40 L2545.13,594.31 L2545.21,594.22 L2545.28,594.12 L2545.35,594.03 L2545.42,593.94 L2545.49,593.84 L2545.55,593.75 L2545.62,593.65 L2545.68,593.55 L2545.74,593.45 L2545.80,593.35 L2545.86,593.25 L2545.92,593.15 L2545.97,593.04 L2546.02,592.94 L2546.07,592.83 L2546.12,592.73 L2546.17,592.62 L2546.21,592.51 L2546.25,592.40 L2546.30,592.29 L2546.33,592.18 L2546.21,592.02 L2546.08,591.86 L2545.95,591.71 L2545.81,591.56 L2545.68,591.42 L2545.53,591.28 L2545.39,591.15 L2545.24,591.02 L2545.09,590.90 L2544.94,590.78 L2544.95,590.70 L2544.96,590.61 L2544.97,590.52 L2544.98,590.44 L2544.99,590.35 L2544.99,590.26 L2545.00,590.17 L2545.00,590.09Z" fill="none" stroke="#ffffff" stroke-width="1.1" stroke-linejoin="round"/><circle cx="2540" cy="590" r="2.7" fill="none" stroke="#ffffff" stroke-width="1.1"/></svg>

</body></html>
